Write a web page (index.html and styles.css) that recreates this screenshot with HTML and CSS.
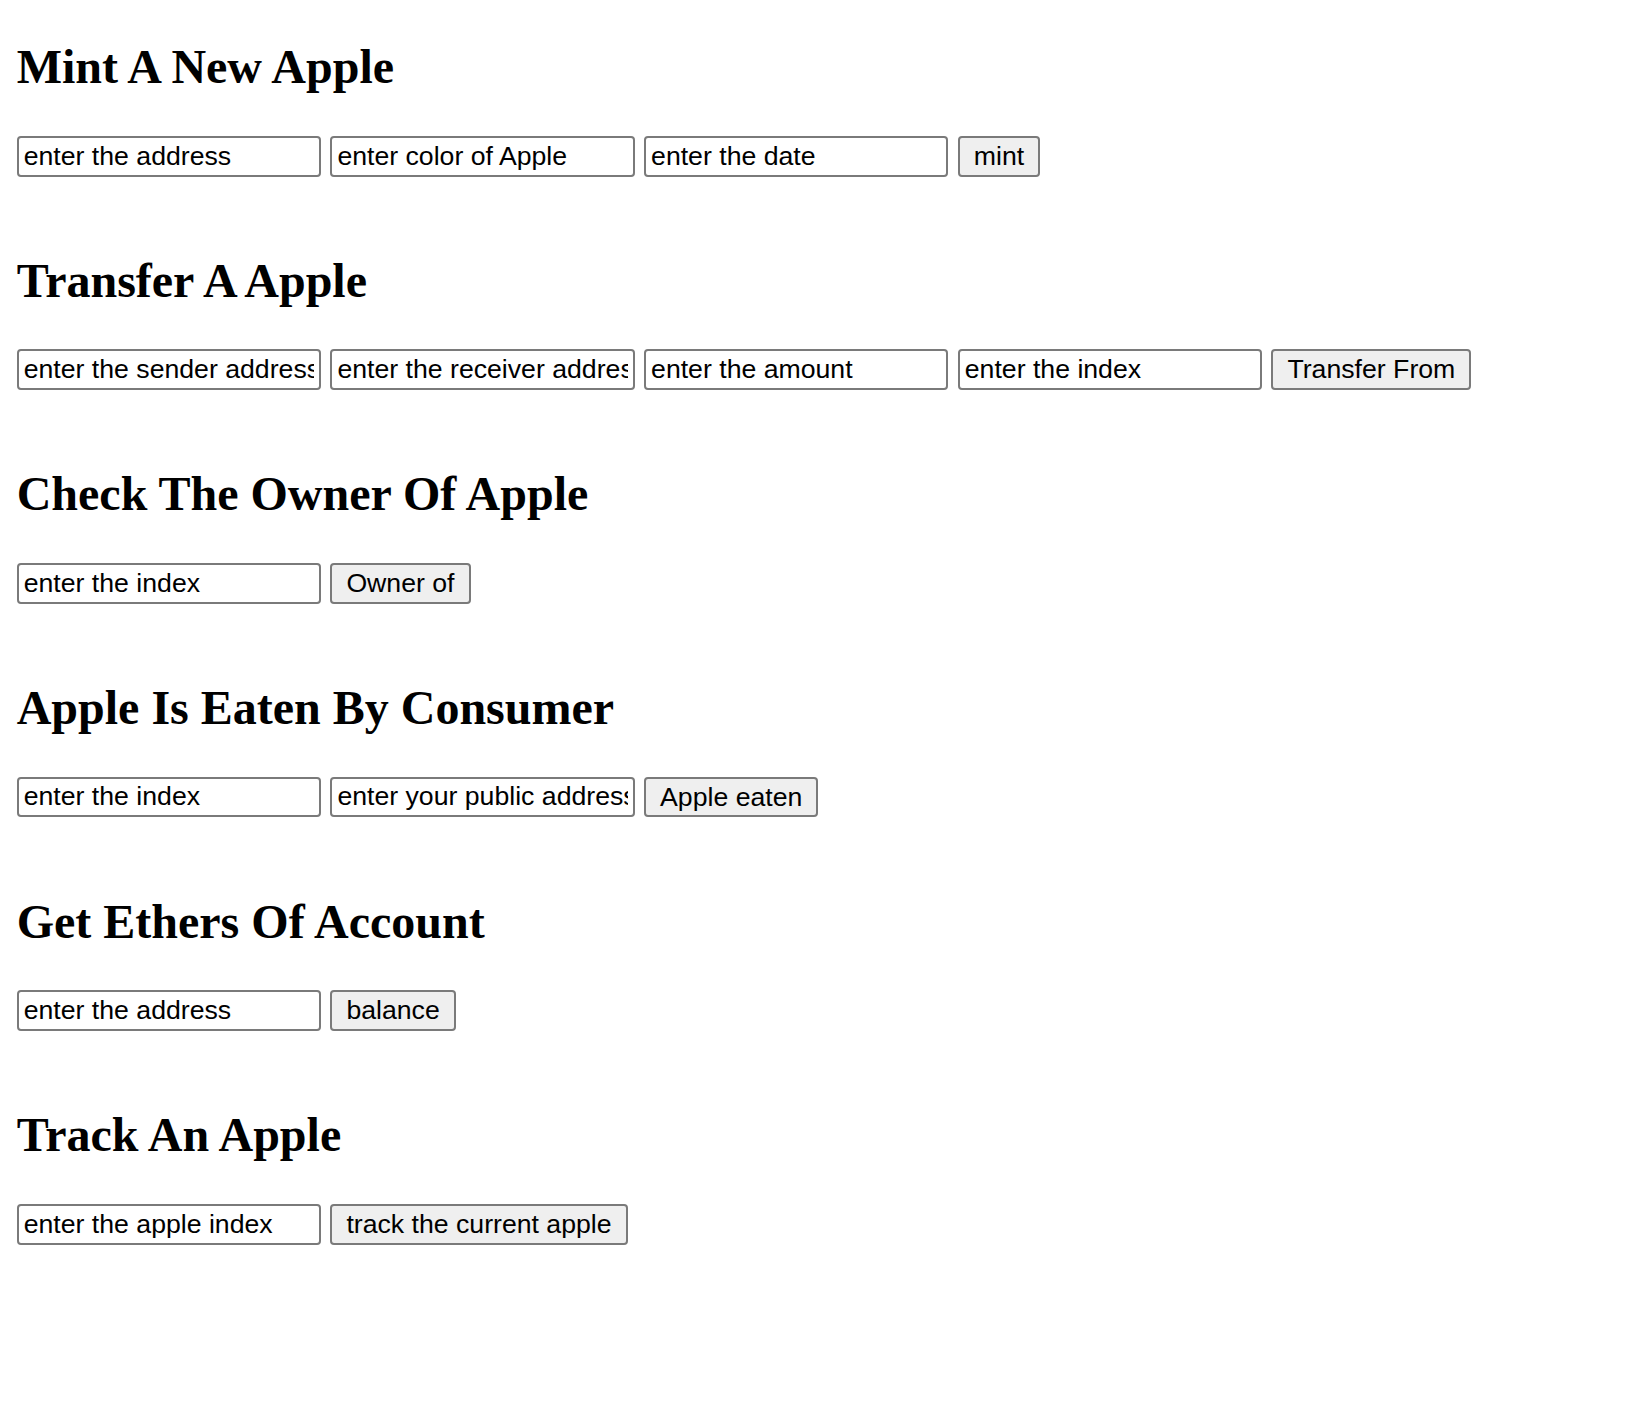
FILE: index.html
```html
<!DOCTYPE html>
<html>
<head>
<meta charset="utf-8">
<title>Apple Tracker</title>
<link rel="stylesheet" href="styles.css">
</head>
<body>
<main class="page">
  <section class="block">
    <h1 class="title">Mint A New Apple</h1>
    <div class="row">
      <input class="field" type="text" value="enter the address">
      <input class="field" type="text" value="enter color of Apple">
      <input class="field" type="text" value="enter the date">
      <button class="btn">mint</button>
    </div>
  </section>
  <section class="block">
    <h1 class="title">Transfer A Apple</h1>
    <div class="row">
      <input class="field" type="text" value="enter the sender address">
      <input class="field" type="text" value="enter the receiver address">
      <input class="field" type="text" value="enter the amount">
      <input class="field" type="text" value="enter the index">
      <button class="btn">Transfer From</button>
    </div>
  </section>
  <section class="block">
    <h1 class="title">Check The Owner Of Apple</h1>
    <div class="row">
      <input class="field" type="text" value="enter the index">
      <button class="btn">Owner of</button>
    </div>
  </section>
  <section class="block">
    <h1 class="title">Apple Is Eaten By Consumer</h1>
    <div class="row">
      <input class="field" type="text" value="enter the index">
      <input class="field" type="text" value="enter your public address">
      <button class="btn">Apple eaten</button>
    </div>
  </section>
  <section class="block">
    <h1 class="title">Get Ethers Of Account</h1>
    <div class="row">
      <input class="field" type="text" value="enter the address">
      <button class="btn">balance</button>
    </div>
  </section>
  <section class="block">
    <h1 class="title">Track An Apple</h1>
    <div class="row">
      <input class="field" type="text" value="enter the apple index">
      <button class="btn">track the current apple</button>
    </div>
  </section>
</main>
</body>
</html>
```
FILE: styles.css
```css
html, body {
  margin: 0;
  background: #ffffff;
}
body {
  font-family: "Liberation Serif", "Times New Roman", serif;
  color: #000;
}
.page {
  padding: 39.3px 16.7px 40px;
  display: flex;
  flex-direction: column;
  gap: 76.3px;
}
.block {
  display: flex;
  flex-direction: column;
}
.title {
  margin: 0 0 41.5px;
  font-family: "Liberation Serif", "Times New Roman", serif;
  font-size: 48px;
  font-weight: bold;
  line-height: normal;
}
.row {
  display: flex;
  align-items: center;
  gap: 9.4px;
}
.field {
  box-sizing: border-box;
  width: 304.3px;
  height: 40.8px;
  margin: 0;
  padding: 0 5px;
  border: 2px solid #7a7a7a;
  border-radius: 4px;
  background: #fff;
  color: #000;
  font-family: "Liberation Sans", Arial, sans-serif;
  font-size: 26.67px;
  outline: none;
}
.btn {
  box-sizing: border-box;
  height: 40.8px;
  margin: 0;
  padding: 0 14px;
  border: 2px solid #7a7a7a;
  border-radius: 4px;
  background: #efefef;
  color: #000;
  font-family: "Liberation Sans", Arial, sans-serif;
  font-size: 26.67px;
  line-height: 1;
}
```
